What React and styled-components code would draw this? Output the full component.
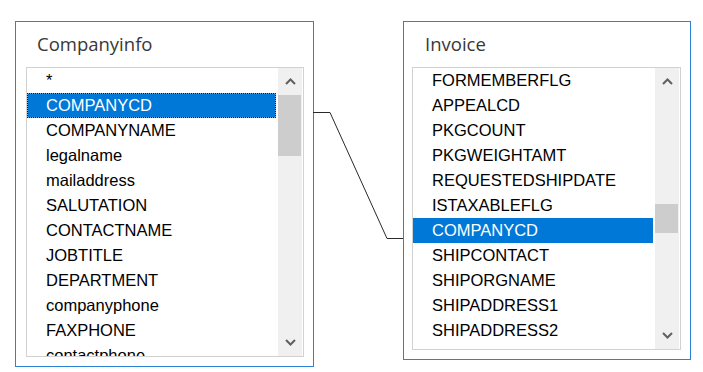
import React from "react";
import styled, { createGlobalStyle } from "styled-components";

const Global = createGlobalStyle`
  html, body { margin: 0; padding: 0; background: #ffffff; }
  body { font-family: "Liberation Sans", Arial, sans-serif; }
  * { box-sizing: border-box; }
`;

const Canvas = styled.div`
  position: relative;
  width: 703px;
  height: 372px;
  display: flex;
  align-items: flex-start;
  gap: 89px;
  padding: 21px 0 0 15px;
  background: #ffffff;
  overflow: hidden;
`;

const Panel = styled.div`
  width: ${(p) => p.$w}px;
  height: ${(p) => p.$h}px;
  border: 1px solid #2b83d6;
  background: #ffffff;
  padding: 0 9px 9px 0;
  display: flex;
  flex-direction: column;
`;

const Title = styled.div`
  font-family: "Open Sans", "Noto Sans", sans-serif;
  font-size: 18.5px;
  line-height: 25px;
  height: 25px;
  color: #383838;
  padding-left: 21px;
  margin-top: 9px;
  margin-bottom: 11px;
`;

const ListBox = styled.div`
  margin-left: ${(p) => p.$inset}px;
  flex: 1;
  min-height: 0;
  border: 1px solid #d2d2d2;
  display: flex;
  background: #ffffff;
  overflow: hidden;
`;

const Rows = styled.div`
  flex: 1;
  min-width: 0;
  overflow: hidden;
  display: flex;
  flex-direction: column;
`;

const Row = styled.div`
  flex: none;
  height: 25px;
  line-height: 25px;
  padding-left: 19px;
  font-family: "Liberation Sans", Arial, sans-serif;
  font-size: 16.5px;
  white-space: nowrap;
  color: ${(p) => (p.$selected ? "#ffffff" : "#000000")};
  background: ${(p) => (p.$selected ? "#0078d7" : "transparent")};
  box-shadow: ${(p) => (p.$focus ? "inset 0 0 0 1px #e2902f" : "none")};
  outline: ${(p) => (p.$focus ? "1px dotted #1a1a1a" : "none")};
  outline-offset: -1px;
`;

const ScrollBar = styled.div`
  flex: none;
  width: 24px;
  margin-left: 2px;
  margin-right: 1px;
  background: #f0f0f0;
  display: flex;
  flex-direction: column;
`;

const ArrowButton = styled.div`
  flex: none;
  height: 27px;
  display: flex;
  align-items: center;
  justify-content: center;
`;

const Track = styled.div`
  flex: 1;
  min-height: 0;
`;

const Thumb = styled.div`
  margin-top: ${(p) => p.$offset}px;
  height: ${(p) => p.$size}px;
  margin-right: 1px;
  background: #cdcdcd;
`;

const Connector = styled.svg`
  position: absolute;
  left: 0;
  top: 0;
  pointer-events: none;
`;

const Chevron = ({ up }) => (
  <svg width="11" height="7" viewBox="0 0 11 7">
    <polyline
      points={up ? "1,6 5.5,1.5 10,6" : "1,1 5.5,5.5 10,1"}
      fill="none"
      stroke="#606060"
      strokeWidth="2"
    />
  </svg>
);

const FieldList = ({ items, selected, focus, inset, thumbOffset, thumbSize }) => (
  <ListBox $inset={inset}>
    <Rows>
      {items.map((it, i) => (
        <Row key={it + i} $selected={i === selected} $focus={focus && i === selected}>
          {it}
        </Row>
      ))}
    </Rows>
    <ScrollBar>
      <ArrowButton>
        <Chevron up />
      </ArrowButton>
      <Track>
        <Thumb $offset={thumbOffset} $size={thumbSize} />
      </Track>
      <ArrowButton>
        <Chevron />
      </ArrowButton>
    </ScrollBar>
  </ListBox>
);

const companyFields = [
  "*",
  "COMPANYCD",
  "COMPANYNAME",
  "legalname",
  "mailaddress",
  "SALUTATION",
  "CONTACTNAME",
  "JOBTITLE",
  "DEPARTMENT",
  "companyphone",
  "FAXPHONE",
  "contactphone",
];

const invoiceFields = [
  "FORMEMBERFLG",
  "APPEALCD",
  "PKGCOUNT",
  "PKGWEIGHTAMT",
  "REQUESTEDSHIPDATE",
  "ISTAXABLEFLG",
  "COMPANYCD",
  "SHIPCONTACT",
  "SHIPORGNAME",
  "SHIPADDRESS1",
  "SHIPADDRESS2",
  "SHIPCITY",
];

export default function App() {
  return (
    <>
      <Global />
      <Canvas>
        <Panel $w={299} $h={346}>
          <Title>Companyinfo</Title>
          <FieldList
            items={companyFields}
            selected={1}
            focus
            inset={10}
            thumbOffset={0}
            thumbSize={61}
          />
        </Panel>
        <Panel $w={288} $h={339}>
          <Title>Invoice</Title>
          <FieldList
            items={invoiceFields}
            selected={6}
            inset={8}
            thumbOffset={109}
            thumbSize={29}
          />
        </Panel>
        <Connector width="703" height="372" viewBox="0 0 703 372">
          <polyline
            points="313,112.5 330,112.5 387,238.5 403,238.5"
            fill="none"
            stroke="#2a2a2a"
            strokeWidth="1"
          />
        </Connector>
      </Canvas>
    </>
  );
}
